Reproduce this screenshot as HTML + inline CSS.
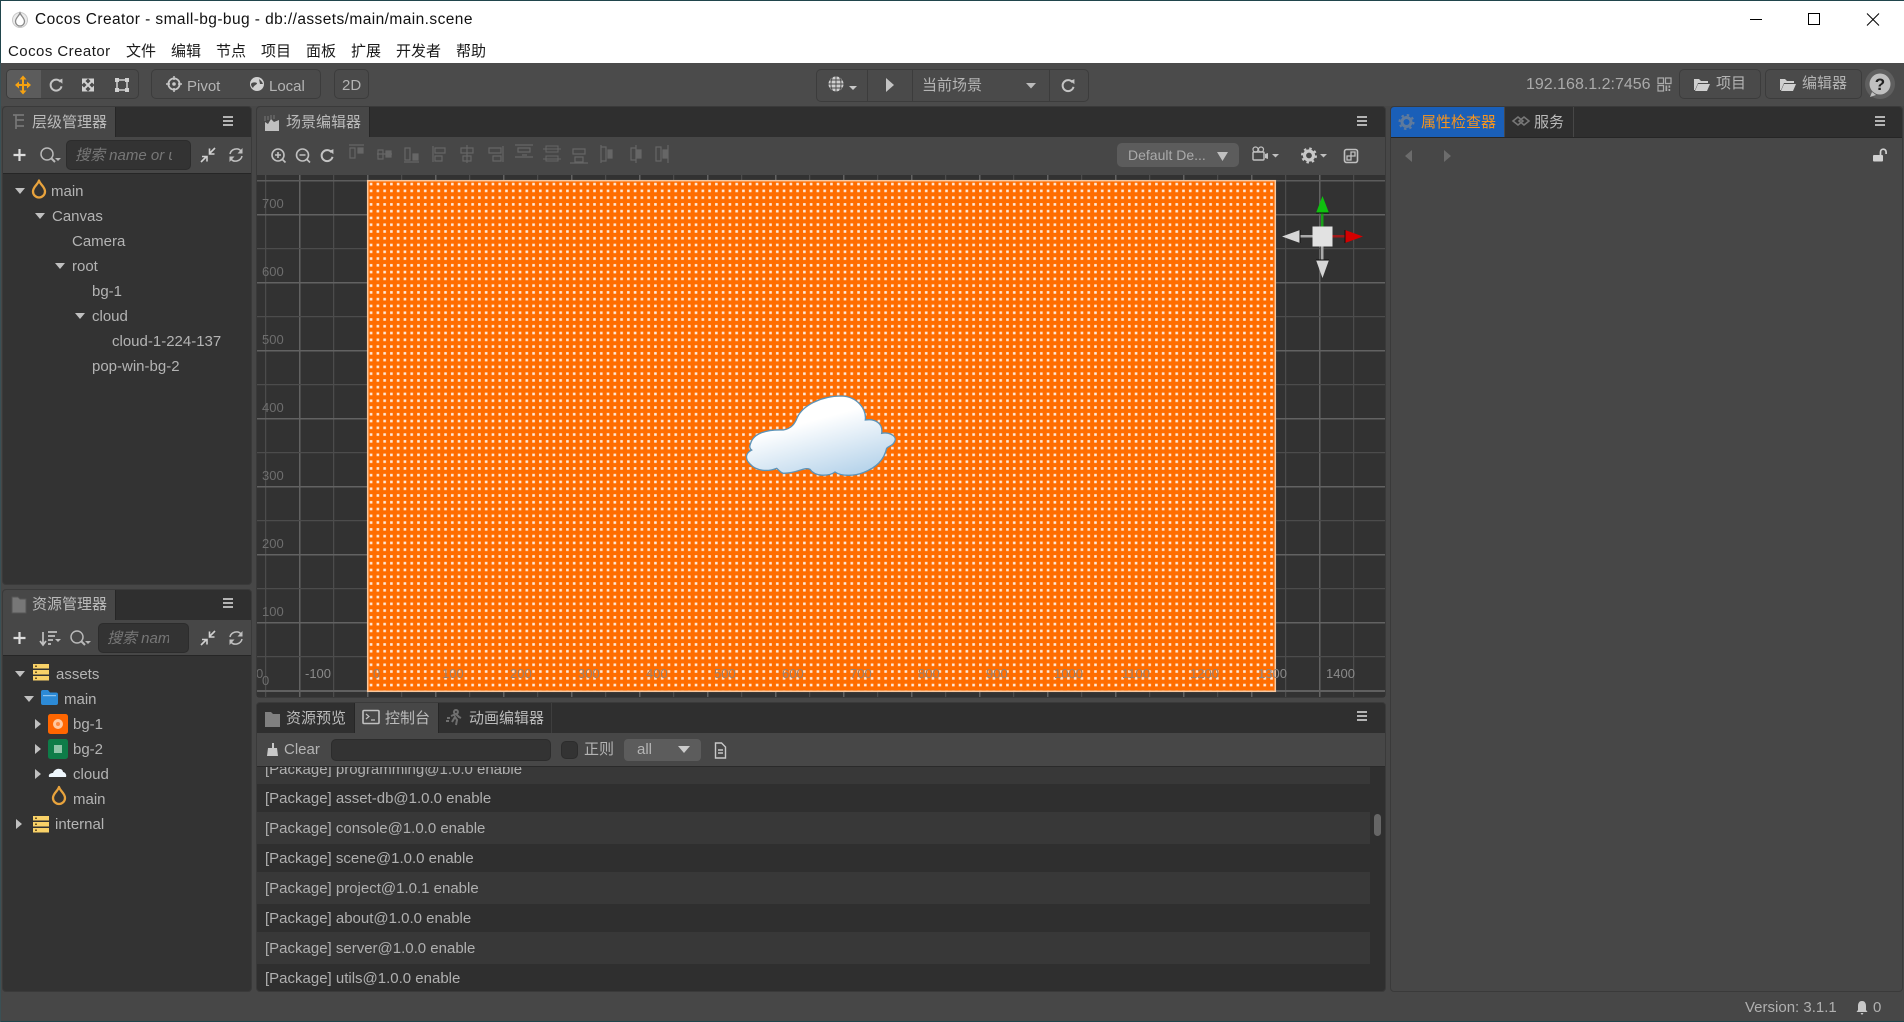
<!DOCTYPE html>
<html lang="zh">
<head>
<meta charset="utf-8">
<title>Cocos Creator - small-bg-bug</title>
<style>
html,body{margin:0;padding:0;width:1904px;height:1022px;overflow:hidden;background:#474747}
body{position:relative;font-family:"Liberation Sans","Noto Sans CJK SC",sans-serif;font-size:15px;color:#b4b4b4}
div{position:absolute;box-sizing:border-box}
.t{white-space:nowrap;line-height:20px;height:20px;margin-top:1px}
.m{color:#1a1a1a;font-size:15px}
.strip{background:#2f2f2f;height:31px;border-bottom:1px solid #262626}
.tab{background:#474747;height:31px}
.panel{background:#333;border:1px solid #3a3a3a;border-radius:4px;overflow:hidden}
.bar{background:#474747;border-bottom:1px solid #262626}
.grp{border:1px solid #3c3c3c;border-radius:5px;background:#4a4a4a}
.inp{background:#333;border:1px solid #2c2c2c;border-radius:5px}
svg{position:absolute;left:0;top:0}
</style>
</head>
<body>
<!-- title bar -->
<div style="left:0;top:0;width:1904px;height:63px;background:#fff;border-top:1px solid #20454c;border-left:1px solid #20454c"></div>
<div class="t" style="left:35px;top:9px;color:#111;font-size:15.5px;letter-spacing:.42px">Cocos Creator - small-bg-bug - db://assets/main/main.scene</div>
<div class="t m" style="left:8px;top:41px;letter-spacing:.45px">Cocos Creator</div>
<div class="t m" style="left:126px;top:41px">文件</div>
<div class="t m" style="left:171px;top:41px">编辑</div>
<div class="t m" style="left:216px;top:41px">节点</div>
<div class="t m" style="left:261px;top:41px">项目</div>
<div class="t m" style="left:306px;top:41px">面板</div>
<div class="t m" style="left:351px;top:41px">扩展</div>
<div class="t m" style="left:396px;top:41px">开发者</div>
<div class="t m" style="left:456px;top:41px">帮助</div>

<!-- main toolbar -->
<div style="left:0;top:63px;width:1904px;height:43px;background:#4b4b4b"></div>
<div class="grp" style="left:6px;top:69px;width:133px;height:30px;overflow:hidden"><div style="left:0;top:0;width:34px;height:30px;background:#5c5c5c"></div></div>
<div class="grp" style="left:151px;top:69px;width:170px;height:30px"></div>
<div class="grp" style="left:334px;top:69px;width:35px;height:30px"></div>
<div class="t" style="left:187px;top:76px;font-size:15px">Pivot</div>
<div class="t" style="left:269px;top:76px;font-size:15px">Local</div>
<div class="t" style="left:342px;top:75px;font-size:15px">2D</div>
<div class="grp" style="left:816px;top:69px;width:273px;height:33px"></div>
<div style="left:867px;top:70px;width:1px;height:31px;background:#3c3c3c"></div>
<div style="left:912px;top:70px;width:1px;height:31px;background:#3c3c3c"></div>
<div style="left:1049px;top:70px;width:1px;height:31px;background:#3c3c3c"></div>
<div class="t" style="left:922px;top:75px;font-size:15px">当前场景</div>
<div class="t" style="left:1526px;top:74px;font-size:16px;color:#aaa">192.168.1.2:7456</div>
<div class="grp" style="left:1679px;top:69px;width:82px;height:30px"></div>
<div class="grp" style="left:1765px;top:69px;width:97px;height:30px"></div>
<div class="t" style="left:1716px;top:73px;font-size:15px">项目</div>
<div class="t" style="left:1802px;top:73px;font-size:15px">编辑器</div>

<!-- hierarchy -->
<div class="panel" style="left:2px;top:106px;width:250px;height:479px">
  <div class="strip" style="left:0;top:0;width:250px"></div>
  <div class="tab" style="left:0;top:0;width:113px;border-right:1px solid #262626"></div>
  <div class="bar" style="left:0;top:30px;width:250px;height:37px"></div>
</div>
<div class="t" style="left:32px;top:112px;color:#bbb">层级管理器</div>
<div class="inp" style="left:66px;top:140px;width:125px;height:30px;overflow:hidden">
  <div class="t" style="left:8px;top:4px;width:97px;overflow:hidden;font-style:italic;color:#777">搜索 name or uuid</div>
</div>
<div class="t" style="left:51px;top:181px">main</div>
<div class="t" style="left:52px;top:206px">Canvas</div>
<div class="t" style="left:72px;top:231px">Camera</div>
<div class="t" style="left:72px;top:256px">root</div>
<div class="t" style="left:92px;top:281px">bg-1</div>
<div class="t" style="left:92px;top:306px">cloud</div>
<div class="t" style="left:112px;top:331px">cloud-1-224-137</div>
<div class="t" style="left:92px;top:356px">pop-win-bg-2</div>

<!-- assets -->
<div class="panel" style="left:2px;top:589px;width:250px;height:403px">
  <div class="strip" style="left:0;top:0;width:250px"></div>
  <div class="tab" style="left:0;top:0;width:113px;border-right:1px solid #262626"></div>
  <div class="bar" style="left:0;top:30px;width:250px;height:36px"></div>
</div>
<div class="t" style="left:32px;top:594px;color:#bbb">资源管理器</div>
<div class="inp" style="left:98px;top:623px;width:91px;height:30px;overflow:hidden">
  <div class="t" style="left:8px;top:4px;width:62px;overflow:hidden;font-style:italic;color:#777">搜索 name or uuid</div>
</div>
<div class="t" style="left:56px;top:664px">assets</div>
<div class="t" style="left:64px;top:689px">main</div>
<div class="t" style="left:73px;top:714px">bg-1</div>
<div class="t" style="left:73px;top:739px">bg-2</div>
<div class="t" style="left:73px;top:764px">cloud</div>
<div class="t" style="left:73px;top:789px">main</div>
<div class="t" style="left:55px;top:814px">internal</div>

<!-- scene -->
<div class="panel" style="left:256px;top:106px;width:1130px;height:592px;background:#333">
  <div class="strip" style="left:0;top:0;width:1130px"></div>
  <div class="tab" style="left:0;top:0;width:113px;border-right:1px solid #262626"></div>
  <div class="bar" style="left:0;top:30px;width:1130px;height:37px;border-bottom:0"></div>
</div>
<div class="t" style="left:286px;top:112px;color:#bbb">场景编辑器</div>
<div style="left:1117px;top:143px;width:122px;height:24px;background:#5c5c5c;border-radius:5px"></div>
<div class="t" style="left:1128px;top:144px;font-size:14px;color:#aaa">Default De...</div>

<!-- console -->
<div class="panel" style="left:256px;top:702px;width:1130px;height:290px;background:#2f2f2f">
  <div class="strip" style="left:0;top:0;width:1130px"></div>
  <div style="left:97px;top:0;width:1px;height:30px;background:#262626"></div>
  <div class="tab" style="left:98px;top:0;width:84px;border-right:1px solid #262626;height:31px"></div>
  <div style="left:294px;top:0;width:1px;height:30px;background:#3e3e3e"></div>
  <div style="left:0;top:64px;width:1113px;height:17px;background:#383838"></div>
  <div style="left:0;top:109px;width:1113px;height:32px;background:#383838"></div>
  <div style="left:0;top:169px;width:1113px;height:32px;background:#383838"></div>
  <div style="left:0;top:229px;width:1113px;height:32px;background:#383838"></div>
  <div style="left:1117px;top:111px;width:7px;height:22px;background:#666;border-radius:4px"></div>
  <div class="t" style="left:8px;top:56px;color:#b0b0b0">[Package] programming@1.0.0 enable</div>
  <div style="left:0;top:30px;width:1130px;height:34px;background:#474747;border-bottom:1px solid #2a2a2a"></div>
  <div class="t" style="left:8px;top:85px;color:#b0b0b0">[Package] asset-db@1.0.0 enable</div>
  <div class="t" style="left:8px;top:115px;color:#b0b0b0">[Package] console@1.0.0 enable</div>
  <div class="t" style="left:8px;top:145px;color:#b0b0b0">[Package] scene@1.0.0 enable</div>
  <div class="t" style="left:8px;top:175px;color:#b0b0b0">[Package] project@1.0.1 enable</div>
  <div class="t" style="left:8px;top:205px;color:#b0b0b0">[Package] about@1.0.0 enable</div>
  <div class="t" style="left:8px;top:235px;color:#b0b0b0">[Package] server@1.0.0 enable</div>
  <div class="t" style="left:8px;top:265px;color:#b0b0b0">[Package] utils@1.0.0 enable</div>
</div>
<div class="t" style="left:286px;top:708px;color:#bbb">资源预览</div>
<div class="t" style="left:385px;top:708px;color:#bbb">控制台</div>
<div class="t" style="left:469px;top:708px;color:#bbb">动画编辑器</div>
<div class="t" style="left:284px;top:739px">Clear</div>
<div class="inp" style="left:331px;top:739px;width:220px;height:22px"></div>
<div class="inp" style="left:561px;top:741px;width:17px;height:18px"></div>
<div class="t" style="left:584px;top:739px">正则</div>
<div style="left:624px;top:739px;width:77px;height:22px;background:#5c5c5c;border-radius:4px"></div>
<div class="t" style="left:637px;top:739px">all</div>

<!-- inspector -->
<div class="panel" style="left:1390px;top:106px;width:513px;height:886px;background:#474747">
  <div class="strip" style="left:0;top:0;width:513px"></div>
  <div style="left:0;top:0;width:113px;height:30px;background:#1a5fb8"></div>
  <div style="left:113px;top:0;width:1px;height:30px;background:#474747"></div>
  <div style="left:182px;top:0;width:1px;height:30px;background:#474747"></div>
</div>
<div class="t" style="left:1421px;top:112px;color:#f7941d">属性检查器</div>
<div class="t" style="left:1534px;top:112px;color:#bbb">服务</div>

<!-- status -->
<div class="t" style="left:1745px;top:997px;font-size:15px;color:#b0b0b0">Version: 3.1.1</div>
<div class="t" style="left:1873px;top:997px;font-size:15px;color:#b0b0b0">0</div>
<div style="left:0;top:1021px;width:1904px;height:1px;background:#20454c"></div>
<div style="left:0;top:63px;width:1px;height:959px;background:#3a5055"></div>

<!-- vector layer -->
<svg width="1904" height="1022" viewBox="0 0 1904 1022" xmlns="http://www.w3.org/2000/svg" font-family="Liberation Sans, sans-serif">
<defs>
  <pattern id="vM" x="367" y="0" width="68" height="10" patternUnits="userSpaceOnUse"><rect width="1.5" height="10" fill="#626262"/></pattern>
  <pattern id="vm" x="333" y="0" width="68" height="10" patternUnits="userSpaceOnUse"><rect width="1.2" height="10" fill="#4c4c4c"/></pattern>
  <pattern id="hM" x="0" y="214" width="10" height="68" patternUnits="userSpaceOnUse"><rect width="10" height="1.5" fill="#626262"/></pattern>
  <pattern id="hm" x="0" y="180" width="10" height="68" patternUnits="userSpaceOnUse"><rect width="10" height="1.2" fill="#4c4c4c"/></pattern>
  <pattern id="dots" x="369.7" y="182.7" width="6.77" height="6.77" patternUnits="userSpaceOnUse"><rect x=".1" y=".1" width="2.6" height="2.6" fill="#fff" fill-opacity=".85"/></pattern>
  <linearGradient id="cg" x1="0.3" y1="0.1" x2="0.75" y2="1"><stop offset="0.25" stop-color="#fff"/><stop offset="1" stop-color="#b4d2ea"/></linearGradient>
  <clipPath id="sc"><rect x="257" y="173" width="1128" height="524"/></clipPath>
  <g id="ham"><path d="M-5-4h10M-5 0h10M-5 4h10" stroke="#c8c8c8" stroke-width="1.8" fill="none"/></g>
  <g id="ref"><path d="M4.700 -3A5.500 5.500 0 1 0 5.500 1.300" stroke="#c4c4c4" stroke-width="2" fill="none"/><path d="M2.500 -4.700L6.400 -6.400V-1.300Z" fill="#c4c4c4"/></g>
  <g id="plus"><path d="M-6 0H6M0-6V6" stroke="#ddd" stroke-width="2.2"/></g>
  <g id="sch"><circle cx="-2" cy="-1" r="6" stroke="#b8b8b8" stroke-width="1.5" fill="none"/><path d="M2.500 3.500L6 7" stroke="#b8b8b8" stroke-width="2"/><path d="M6 3h6l-3 3z" fill="#b8b8b8"/></g>
  <g id="col"><path d="M-7 7L-1.5 1.5M-6 1.5H-1V6.5M7-7L1.5-1.5M1.5-6.5V-1H6.5" stroke="#d0d0d0" stroke-width="1.6" fill="none"/></g>
  <g id="sync"><path d="M-6-1C-5-6 2-8 5-4M6 1C5 6-2 8-5 4" stroke="#c0c0c0" stroke-width="1.5" fill="none"/><path d="M6.5-7V-1.5H1.5ZM-6.5 7V1.5H-1.5Z" fill="#c0c0c0"/></g>
  <g id="flame"><path d="M0-8C-1-4-6-2-6 3A6 6 0 0 0 6 3C6-2 1-4 0-8Z" fill="none" stroke="#e8a33d" stroke-width="2.3" stroke-linejoin="round"/></g>
  <g id="stack"><path d="M0 0h16v4.500H0zM0 6h16v4.500H0zM0 12h16v4.500H0z" fill="#f9d268"/><path d="M2 1.500h2v1.500H2zM2 7.500h2v1.500H2zM2 13.500h2v1.500H2z" fill="#6d5520"/></g>
</defs>

<!-- title icon -->
<circle cx="20" cy="20" r="7.500" fill="#ececec" stroke="#c8c8c8"/>
<path d="M20 13C19 16 15.500 18 15.500 21.500A4.500 4.500 0 0 0 24.500 21.500C24.500 18 21 16 20 13Z" fill="#fff" stroke="#8a8a8a" stroke-width="1.300"/>
<!-- window controls -->
<path d="M1750 19.500h12" stroke="#000" stroke-width="1"/>
<rect x="1808.500" y="13.500" width="11" height="11" fill="none" stroke="#000"/>
<path d="M1867 13.500l12 12M1879 13.500l-12 12" stroke="#000" stroke-width="1"/>

<!-- toolbar icons -->
<path d="M16 85H30M23 78V92" stroke="#f6a211" stroke-width="2"/>
<path d="M23 75.500l3.500 4h-7zM23 94.500l3.500-4h-7zM15 85l4-3.500v7zM31 85l-4-3.500v7z" fill="#f6a211"/>
<use href="#ref" x="56" y="85"/>
<path d="M83 80l10 10M93 80l-10 10" stroke="#d0d0d0" stroke-width="2"/>
<path d="M82 78.500h6l-6 6zM94 78.500h-6l6 6zM82 91.500h6l-6-6zM94 91.500h-6l6-6z" fill="#d0d0d0"/>
<rect x="117" y="80" width="10" height="10" fill="none" stroke="#c8c8c8" stroke-width="1.600"/>
<path d="M115 78h4v4h-4zM125 78h4v4h-4zM115 88h4v4h-4zM125 88h4v4h-4z" fill="#d0d0d0"/>
<circle cx="174" cy="84" r="5.600" fill="none" stroke="#c8c8c8" stroke-width="1.800"/><circle cx="174" cy="84" r="1.800" fill="#c8c8c8"/>
<path d="M174 76v4M174 88v4M166 84h4M178 84h4" stroke="#c8c8c8" stroke-width="1.500"/>
<circle cx="257" cy="84" r="7" fill="#d0d0d0"/><path d="M253 88c1-3 4-3 4-5-2-1-5-1-6 1 0 2 1 3 2 4zM259 79c1 1 3 2 4 5l-3 0z" fill="#4a4a4a"/>
<!-- preview group icons -->
<circle cx="836" cy="84" r="7.500" fill="#cfcfcf"/>
<path d="M828.500 84h15M829.500 80h13M829.500 88h13M836 76.500v15M832.500 77c-2 4-2 10 0 14M839.500 77c2 4 2 10 0 14" stroke="#4a4a4a" stroke-width=".9" fill="none"/>
<path d="M849 86h8l-4 4z" fill="#c8c8c8"/>
<path d="M886 78V92L894 85Z" fill="#c4c4c4"/>
<path d="M1026 83h10l-5 5.500z" fill="#bbb"/>
<use href="#ref" x="1068" y="85.500"/>
<!-- qr -->
<path d="M1658 78h5.500v5.500h-5.500zM1665.500 78h5.500v5.500h-5.500zM1658 85.500h5.500v5.500h-5.500z" fill="none" stroke="#aaa" stroke-width="1.200"/>
<path d="M1665.500 85.500h1.700v5.500h-1.700zM1668.500 85.500h1.700v2.300h-1.700zM1668.500 89h1.700v2h-1.700z" fill="#aaa"/>
<!-- folders -->
<path d="M1694 79h5l2 2h7v2h-10l-3 7h-1zM1698 84h12l-3 7h-12z" fill="#d0d0d0"/>
<path d="M1780 79h5l2 2h7v2h-10l-3 7h-1zM1784 84h12l-3 7h-12z" fill="#d0d0d0"/>
<!-- help -->
<circle cx="1880" cy="84" r="15" fill="#5f5f5f"/><circle cx="1880" cy="84" r="10.500" fill="#c0c0c0"/><path d="M1872 92l-2 5 6-2z" fill="#c0c0c0"/>
<text x="1880" y="90" text-anchor="middle" font-size="17" font-weight="700" fill="#222">?</text>

<!-- panel hamburgers -->
<use href="#ham" x="228" y="121"/><use href="#ham" x="228" y="603"/>
<use href="#ham" x="1362" y="121"/><use href="#ham" x="1362" y="716"/><use href="#ham" x="1880" y="121"/>

<!-- hierarchy tab icon & toolbar -->
<path d="M13 115h11M16 115v14M16 120h8M16 126h8" stroke="#777" stroke-width="1.700" fill="none"/>
<use href="#plus" x="19.500" y="155"/><use href="#sch" x="49" y="155"/>
<use href="#col" x="208" y="155"/><use href="#sync" x="236" y="155"/>
<!-- hierarchy tree -->
<path d="M15 188h10l-5 6zM35 213h10l-5 6zM55 263h10l-5 6zM75 313h10l-5 6z" fill="#c0c0c0"/>
<use href="#flame" x="39" y="188.500"/>
<!-- assets tab icon & toolbar -->
<path d="M12 597h6l2 2h6v14H12z" fill="#777" stroke="#555"/>
<use href="#plus" x="19.500" y="638"/>
<path d="M43 632v12M40 641l3 4 3-4" stroke="#c0c0c0" stroke-width="1.700" fill="none"/><path d="M48 632h9M48 636h7M48 640h5M48 644h3" stroke="#c0c0c0" stroke-width="1.700"/><path d="M55 639h6l-3 3z" fill="#c0c0c0"/>
<use href="#sch" x="79" y="638"/>
<use href="#col" x="208" y="638"/><use href="#sync" x="236" y="638"/>
<!-- assets tree -->
<path d="M15 671h10l-5 6zM24 696h10l-5 6z" fill="#c0c0c0"/>
<path d="M35 719v10l6-5zM35 744v10l6-5zM35 769v10l6-5zM16 819v10l6-5z" fill="#c0c0c0"/>
<use href="#stack" x="33" y="664"/><use href="#stack" x="33" y="816"/>
<path d="M41 692a2 2 0 0 1 2-2h5l2 2.500h6a2 2 0 0 1 2 2V703a2 2 0 0 1-2 2H43a2 2 0 0 1-2-2z" fill="#2c8ad6"/><rect x="43" y="695" width="13" height="1.200" fill="#8fc4ee"/>
<rect x="48" y="714" width="20" height="20" rx="2.500" fill="#ff6600"/><circle cx="58" cy="724" r="5" fill="#ffc9a0"/><circle cx="58" cy="724" r="2" fill="#ff8a40"/>
<rect x="48" y="739" width="20" height="20" rx="2.500" fill="#0e7c48"/><rect x="54" y="745" width="8" height="8" fill="#8fc4a8"/>
<path d="M49 777c-1-3 2-4 4-4 1-3 4-5 7-4 2 0 3 2 3 3 2 0 4 3 3 5z" fill="#eef6fc"/>
<use href="#flame" x="59" y="795"/>

<!-- scene canvas -->
<g clip-path="url(#sc)">
  <rect x="257" y="173" width="1128" height="524" fill="#323232"/>
  <rect x="257" y="173" width="1128" height="524" fill="url(#vm)"/>
  <rect x="257" y="173" width="1128" height="524" fill="url(#vM)"/>
  <rect x="257" y="173" width="1128" height="524" fill="url(#hm)"/>
  <rect x="257" y="173" width="1128" height="524" fill="url(#hM)"/>
  <rect x="257" y="173" width="1128" height="2" fill="#474747"/>
  <rect x="257" y="180" width="1128" height="1.500" fill="#5c5c5c"/>
  <rect x="257" y="690" width="1128" height="2" fill="#606060"/>
  <rect x="367" y="180" width="909" height="512" fill="#ff6d00"/>
  <rect x="367" y="180" width="909" height="512" fill="url(#dots)"/>
  <rect x="367.700" y="180.700" width="907.600" height="510.600" fill="none" stroke="#f8c8a0" stroke-width="1.500"/>
  <!-- cloud -->
  <g transform="translate(720 380) scale(.3333)">
    <path d="M92 190C100 162 135 148 190 150C215 145 224 132 232 112C248 78 300 48 365 48C410 50 440 85 436 120C465 115 490 130 485 160C510 155 530 170 525 182C520 198 505 198 500 205C492 240 470 262 430 278C405 288 365 290 345 276C325 290 285 290 270 268C250 260 235 280 190 280C178 276 175 268 170 265C145 275 110 275 90 252C78 240 72 222 95 210C88 205 88 198 92 190Z" fill="url(#cg)" stroke="#5b93b8" stroke-width="4"/>
  </g>
  <!-- y labels -->
  <g font-size="13" fill="#6e6e6e">
    <text x="262" y="208">700</text><text x="262" y="276">600</text><text x="262" y="344">500</text><text x="262" y="412">400</text><text x="262" y="480">300</text><text x="262" y="548">200</text><text x="262" y="616">100</text>
    <text x="256" y="678">0</text><text x="262" y="685">0</text>
  </g>
  <!-- x labels -->
  <g font-size="13" fill="#8a8a8a">
    <text x="305" y="678">-100</text><text x="373" y="678" fill="#98806e">0</text>
    <text x="442" y="678" fill="#98806e">100</text><text x="510" y="678" fill="#98806e">200</text><text x="578" y="678" fill="#98806e">300</text><text x="646" y="678" fill="#98806e">400</text><text x="714" y="678" fill="#98806e">500</text><text x="782" y="678" fill="#98806e">600</text><text x="850" y="678" fill="#98806e">700</text><text x="918" y="678" fill="#98806e">800</text><text x="986" y="678" fill="#98806e">900</text><text x="1054" y="678" fill="#98806e">1000</text><text x="1122" y="678" fill="#98806e">1100</text><text x="1190" y="678" fill="#98806e">1200</text><text x="1258" y="678">1300</text><text x="1326" y="678">1400</text>
  </g>
  <!-- gizmo -->
  <rect x="1321" y="212" width="2.500" height="16" fill="#17a017"/>
  <rect x="1332" y="235" width="14" height="2.500" fill="#a01818"/>
  <rect x="1298" y="235" width="15" height="2.500" fill="#aaa"/>
  <rect x="1321" y="246" width="2.500" height="14" fill="#aaa"/>
  <path d="M1322.500 196L1329 213H1316Z" fill="#0fc00f"/>
  <path d="M1363 236.500L1345 243V230Z" fill="#d40000"/>
  <path d="M1282 236.500L1300 230V243Z" fill="#d6d6d6"/>
  <path d="M1322.500 278L1316 260H1329Z" fill="#d6d6d6"/>
  <path d="M1316 213h13M1345 230v13M1300 230v13M1316 260h13" stroke="#111" stroke-opacity=".7" stroke-width="1.400"/>
  <rect x="1312.500" y="226.500" width="20" height="20" fill="#e2e2e2"/>
</g>

<!-- scene tab + toolbar icons -->
<path d="M265 131v-9l3 2 3-5 3 3 5-2v11z" fill="#c0c0c0"/><path d="M265 116v5M268 116v4M271 115v4M274 115v4" stroke="#777"/>
<g transform="translate(278 155)"><circle r="6" fill="none" stroke="#c0c0c0" stroke-width="1.600"/><path d="M-3 0h6M0-3v6M4 4l3.500 3.500" stroke="#c0c0c0" stroke-width="1.600"/></g>
<g transform="translate(302.500 155)"><circle r="6" fill="none" stroke="#c0c0c0" stroke-width="1.600"/><path d="M-3 0h6M4 4l3.500 3.500" stroke="#c0c0c0" stroke-width="1.600"/></g>
<use href="#ref" x="327" y="155.500"/>
<g fill="none" stroke="#666" stroke-width="1.200" transform="translate(0 -1)">
  <path d="M349 146h15M350 149h5v10h-5z"/><path d="M358 149h5v5h-5z" fill="#666"/>
  <path d="M377 155h15M378 151h5v9h-5z"/><path d="M386 152h5v6h-5z" fill="#666"/>
  <path d="M404 163h15M405 149h5v12h-5z"/><path d="M413 155h5v6h-5z" fill="#666"/>
  <path d="M433 147v16M435 149h10v5h-10zM435 157h7v5h-7z"/>
  <path d="M467 146v18M461 149h12v5h-12zM463 157h8v5h-8z"/>
  <path d="M503 147v16M489 149h12v5h-12zM493 157h8v5h-8z"/>
  <path d="M515 146h18M518 149h12v4h-12zM522 156h5M515 158h18"/>
  <path d="M543 150h18M546 147h12v6h-12zM546 157h12v5h-12zM543 160h18" stroke-width="1"/>
  <path d="M570 164h18M573 150h12v5h-12zM575 158h8v5h-8z"/>
  <path d="M601 146v18M601 148h5v14h-5z"/><path d="M608 151h4v8h-4z" fill="#666"/>
  <path d="M636 146v18M631 149h5v12h-5z"/><path d="M637 151h4v8h-4z" fill="#666"/>
  <path d="M668 146v18M656 148h5v14h-5z"/><path d="M663 151h4v8h-4z" fill="#666"/>
</g>
<path d="M1217 152h11l-5.500 9z" fill="#c0c0c0"/>
<rect x="1253" y="152" width="11" height="8" rx="1" fill="none" stroke="#c0c0c0" stroke-width="1.400"/><circle cx="1255.500" cy="149.500" r="2.500" fill="none" stroke="#c0c0c0" stroke-width="1.200"/><circle cx="1261" cy="149.500" r="2.500" fill="none" stroke="#c0c0c0" stroke-width="1.200"/><path d="M1265 154l3-1v6l-3-1z" fill="#c0c0c0"/>
<path d="M1272 154h7l-3.500 3.500z" fill="#c0c0c0"/>
<circle cx="1309" cy="155.500" r="4.500" fill="none" stroke="#c8c8c8" stroke-width="3.200"/><circle cx="1309" cy="155.500" r="7" fill="none" stroke="#c8c8c8" stroke-width="2" stroke-dasharray="2.500 3"/>
<path d="M1320 154h7l-3.500 3.500z" fill="#c0c0c0"/>
<rect x="1344.500" y="149.500" width="13" height="13" rx="2" fill="none" stroke="#c0c0c0" stroke-width="1.600"/><path d="M1347 156h4v4h-4zM1351 152h4v4h-4z" fill="none" stroke="#c0c0c0" stroke-width="1.300"/>

<!-- console tab icons -->
<path d="M265 712h6l2 2h7v13h-15z" fill="#808080"/>
<rect x="363" y="710.500" width="16" height="13" rx="1" fill="none" stroke="#c0c0c0" stroke-width="1.600"/><path d="M366 714l3 2.500-3 2.500M371 720h4" stroke="#c0c0c0" stroke-width="1.200" fill="none"/>
<path d="M456 710a2 2 0 1 1-.1 0zM451 716l5-2 3 3 2 1M452 722l3-5 2 3-1 5M447 718h3M446 721h3" stroke="#6f6f6f" stroke-width="2" fill="none"/>
<path d="M272 743h2v5h3l1 8h-11l1-8h4z" fill="#c8c8c8"/>
<path d="M678 746h12l-6 7z" fill="#ccc"/>
<path d="M715.500 743h6l4 4v11h-10zM718 750h5M718 753h5" fill="none" stroke="#c8c8c8" stroke-width="1.400"/>

<!-- inspector icons -->
<circle cx="1406.500" cy="122" r="4.500" fill="none" stroke="#5f7a9c" stroke-width="3"/><circle cx="1406.500" cy="122" r="7" fill="none" stroke="#5f7a9c" stroke-width="2" stroke-dasharray="2.500 3"/>
<path d="M1513 121l5-4 5 4-5 4zM1519 121l5-4 5 4-5 4z" fill="none" stroke="#777" stroke-width="1.600"/>
<path d="M1412 150v12l-7-6zM1444 150v12l7-6z" fill="#6c6c6c"/>
<rect x="1873" y="155" width="10" height="6.500" rx="1" fill="#d0d0d0"/><path d="M1880.500 155v-3a2.800 2.800 0 0 1 5.600 0v2" fill="none" stroke="#d0d0d0" stroke-width="1.700"/>
<!-- bell -->
<path d="M1862 1001c-3 0-4 2.500-4 5v4l-1.500 2h11l-1.500-2v-4c0-2.500-1-5-4-5zM1860.500 1013h3l-1.500 2z" fill="#c8c8c8"/>
</svg>
</body>
</html>
